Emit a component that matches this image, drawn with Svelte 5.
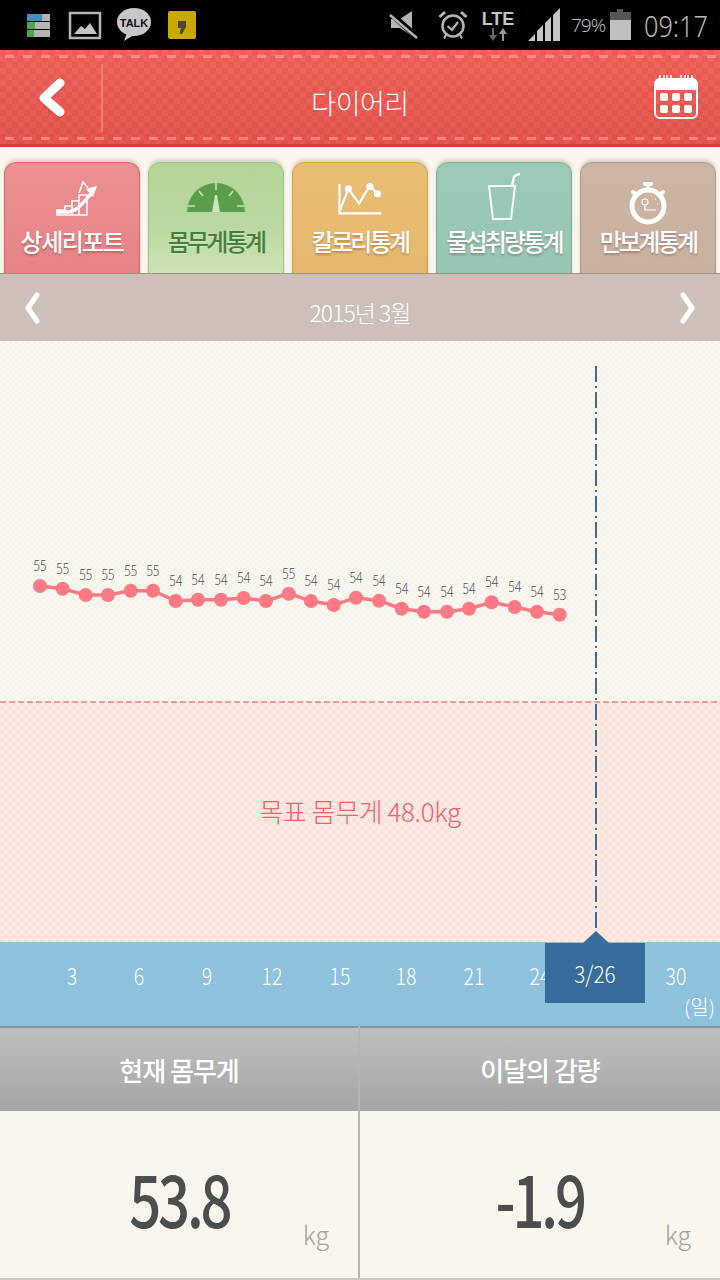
<script lang="ts">
	const points = [
		[40, 586, 55], [62.7, 588.7, 55], [85.7, 595, 55], [108, 595, 55], [130.7, 590.7, 55], [153, 590.7, 55],
		[175.7, 601, 54], [198, 599.7, 54], [221, 599.7, 54], [243.7, 598, 54], [266, 601, 54], [288.7, 593.7, 55],
		[311, 601, 54], [333.7, 605, 54], [356, 597.7, 54], [379, 600.7, 54], [401.7, 608.7, 54], [424, 611.7, 54],
		[447, 611.7, 54], [469, 608.7, 54], [491.7, 602.3, 54], [514.7, 607, 54], [537, 611.7, 54], [559.7, 614.7, 53]
	];
	const line = points.map((p) => p[0] + ',' + (p[1] - 341)).join(' ');

	const ticks = [
		{ x: 72, t: '3' }, { x: 139, t: '6' }, { x: 207, t: '9' }, { x: 272, t: '12' }, { x: 340, t: '15' },
		{ x: 406, t: '18' }, { x: 474, t: '21' }, { x: 540, t: '24' }, { x: 676, t: '30' }
	];

	const tabs = [
		{ id: 'report', label: '상세리포트' },
		{ id: 'weight', label: '몸무게통계' },
		{ id: 'kcal', label: '칼로리통계' },
		{ id: 'water', label: '물섭취량통계' },
		{ id: 'steps', label: '만보계통계' }
	];
</script>

<main>
	<div class="status">
		<div class="status-left">
			<svg width="26" height="28" viewBox="0 0 26 28">
				<rect x="1" y="3" width="15" height="7" fill="#3d8fc4" /><rect x="16" y="3" width="8" height="7" fill="#b5b5b5" />
				<rect x="1" y="11" width="8" height="7" fill="#4aa64a" /><rect x="9" y="11" width="15" height="7" fill="#b5b5b5" />
				<rect x="1" y="19" width="7" height="7" fill="#4aa64a" /><rect x="8" y="19" width="16" height="7" fill="#b5b5b5" />
			</svg>
			<svg width="34" height="30" viewBox="0 0 34 30">
				<rect x="2" y="3" width="30" height="25" fill="none" stroke="#b5b5b5" stroke-width="2.5" />
				<path d="M6 24 L13 16 L17 19 L22 13 L29 24 Z" fill="#c4c4c4" />
			</svg>
			<svg width="36" height="36" viewBox="0 0 36 36">
				<ellipse cx="18" cy="15" rx="17" ry="14" fill="#c8c8c8" />
				<path d="M11 26 L8 34 L18 28 Z" fill="#c8c8c8" />
				<text x="18" y="19.5" text-anchor="middle" class="talk">TALK</text>
			</svg>
			<svg width="30" height="30" viewBox="0 0 30 30">
				<rect x="1" y="1" width="28" height="28" rx="2" fill="#c9a800" />
				<path d="M11 11 H19 V17 L15 24 H12.5 L14 18 H11 Z" fill="#4a4a30" />
			</svg>
		</div>
		<div class="status-right">
			<svg width="32" height="30" viewBox="0 0 32 30">
				<path d="M2 9 H11 L23 1 V26 L11 18 H2 Z" fill="#b5b5b5" />
				<path d="M1 3 L28 27" stroke="#000" stroke-width="6" />
				<path d="M1 5 L28 28" stroke="#b5b5b5" stroke-width="2.5" />
			</svg>
			<svg width="30" height="30" viewBox="0 0 30 30" fill="none" stroke="#b5b5b5">
				<circle cx="15" cy="16" r="10.5" stroke-width="2.5" />
				<path d="M9.500 16 L14 20 L20 12" stroke-width="2.2" />
				<path d="M1.500 7 L7 2 M23 2 L28.500 7" stroke-width="3" />
				<path d="M8 25 L6 28.500 M22 25 L24 28.500" stroke-width="2" />
			</svg>
			<div class="lte">
				<span>LTE</span>
				<svg width="20" height="13" viewBox="0 0 20 13">
					<path d="M6 0 V7 H9 L5 13 L1 7 H4 V0 Z" fill="#666" />
					<path d="M14 13 V6 H11 L15 0 L19 6 H16 V13 Z" fill="#999" />
				</svg>
			</div>
			<svg class="signal" width="34" height="36" viewBox="0 0 34 36">
				<path d="M1 34 L8 27 V34 Z M10 34 V24 L16 18 V34 Z M18 34 V16 L24 10 V34 Z M26 34 V8 L33 1 V34 Z" fill="#c4c4c4" />
			</svg>
			<span class="pct">79%</span>
			<svg class="battery" width="24" height="32" viewBox="0 0 24 32">
				<path d="M8 0 H14 V3 H22 V11 H1 V3 H8 Z" fill="#555" />
				<rect x="1" y="11" width="21" height="20" fill="#c0c0c0" />
			</svg>
			<span class="clock">09:17</span>
		</div>
	</div>

	<header class="topbar">
		<div class="back">
			<svg width="30" height="40" viewBox="0 0 30 40">
				<path d="M23 5 L7 20 L23 34" fill="none" stroke="#c9433a" stroke-width="9" stroke-linecap="round" stroke-linejoin="round" opacity="0.5" transform="translate(0 1.500)" />
				<path d="M23 5 L7 20 L23 34" fill="none" stroke="#fff" stroke-width="9" stroke-linecap="round" stroke-linejoin="round" />
			</svg>
		</div>
		<h1>다이어리</h1>
		<div class="cal">
			<svg width="46" height="46" viewBox="0 0 46 46">
				<rect x="2" y="5" width="42" height="39" rx="5" fill="none" stroke="#fff" stroke-width="2" />
				<path d="M2 16 V9 a5 5 0 0 1 5 -5 H39 a5 5 0 0 1 5 5 V16 Z" fill="#fff" />
				<path d="M7 1 V8 a1.500 1.500 0 0 0 4 0 V1 M14 1 V8 a1.500 1.500 0 0 0 4 0 V1 M28 1 V8 a1.500 1.500 0 0 0 4 0 V1 M35 1 V8 a1.500 1.500 0 0 0 4 0 V1" fill="none" stroke="#fff" stroke-width="1.500" />
				<g fill="#fff">
					<rect x="7" y="19" width="8" height="8" rx="2" /><rect x="19" y="19" width="8" height="8" rx="2" /><rect x="31" y="19" width="8" height="8" rx="2" />
					<rect x="7" y="31" width="8" height="8" rx="2" /><rect x="19" y="31" width="8" height="8" rx="2" /><rect x="31" y="31" width="8" height="8" rx="2" />
				</g>
			</svg>
		</div>
	</header>

	<nav class="tabs">
		{#each tabs as tab}
			<div class="tab {tab.id}">
				<div class="tab-icon">
					{#if tab.id === 'report'}
						<svg width="44" height="38" viewBox="0 0 44 38" fill="none" stroke="#fff" stroke-width="1.500">
							<path d="M3 36 V31 H11 V27 H18 V22 H25 V16 H33 V36 Z M11 31 V36 M18 27 V36 M25 22 V36" />
							<path d="M2 33 H14 C24 32 30 22 39 13" stroke-width="3.500" />
							<path d="M32 10 L43 7 L39 18 Z" fill="#fff" stroke="none" />
							<path d="M25 14 L29 3 L34 9" />
						</svg>
					{:else if tab.id === 'weight'}
						<svg width="60" height="32" viewBox="0 0 60 32">
							<path d="M1 31 A29 29 0 0 1 59 31 Z" fill="#5a9e4b" />
							<path d="M30 2 V9 M13 10 L17 15 M47 10 L43 15 M2 25 H9 M51 25 H58" stroke="#cfe3b9" stroke-width="1.500" />
							<path d="M26 31 L29 14 H31 L34 31 Z" fill="#cfe3b9" />
						</svg>
					{:else if tab.id === 'kcal'}
						<svg width="48" height="34" viewBox="0 0 52 38" fill="none" stroke="#fff" stroke-width="2.500">
							<path d="M3 1 V34 H50" />
							<path d="M3 32 L13 6.500 L25 23 L37 3 L45.500 12" />
							<g fill="#fff" stroke="none"><circle cx="13" cy="6.500" r="4" /><circle cx="37" cy="4" r="4" /><circle cx="45.500" cy="12" r="4" /></g>
						</svg>
					{:else if tab.id === 'water'}
						<svg width="34" height="48" viewBox="0 0 34 48" fill="none" stroke="#fff" stroke-width="2">
							<path d="M2 13 H28 L24 46 H6 Z" />
							<path d="M25 13 L27 4 Q28 2 33 1" stroke-width="2.500" />
						</svg>
					{:else}
						<svg width="40" height="44" viewBox="0 0 40 44" fill="none" stroke="#fff">
							<circle cx="20" cy="25" r="16" stroke-width="5" />
							<rect x="15" y="1" width="10" height="4" rx="2" fill="#fff" stroke="none" />
							<path d="M20 4 V9" stroke-width="3" />
							<path d="M5 11 L8 14 M35 11 L32 14" stroke-width="4" stroke-linecap="round" />
							<circle cx="17" cy="21" r="3" stroke-width="1.200" />
							<path d="M17 25 V29 H28 M23 15 h1 M27 18 h1 M29 23 h1" stroke-width="1.200" />
						</svg>
					{/if}
				</div>
				<span>{tab.label}</span>
			</div>
		{/each}
	</nav>

	<div class="month">
		<svg width="16" height="32" viewBox="0 0 16 32"><path d="M13 3 L4 16 L13 29" fill="none" stroke="#fff" stroke-width="5" stroke-linecap="round" stroke-linejoin="round" /></svg>
		<span>2015년 3월</span>
		<svg width="16" height="32" viewBox="0 0 16 32"><path d="M3 3 L12 16 L3 29" fill="none" stroke="#fff" stroke-width="5" stroke-linecap="round" stroke-linejoin="round" /></svg>
	</div>

	<section class="chart">
		<div class="zone-free"></div>
		<div class="zone-goal"><span>목표 몸무게 48.0kg</span></div>
		<svg class="plot" width="720" height="601" viewBox="0 0 720 601">
			<line x1="0" y1="361" x2="720" y2="361" stroke="#e0857c" stroke-width="1.500" stroke-dasharray="6 3" />
			<line x1="596" y1="25" x2="596" y2="592" stroke="#3a6d9b" stroke-width="2" stroke-dasharray="16 4 2 4" />
			<polyline points={line} fill="none" stroke="#fd7a85" stroke-width="3.500" />
			{#each points as p}
				<circle cx={p[0]} cy={p[1] - 341} r="7" fill="#fd7a85" />
				<text x={p[0]} y={p[1] - 341 - 15} text-anchor="middle" textLength="13" lengthAdjust="spacingAndGlyphs" class="val">{p[2]}</text>
			{/each}
		</svg>
	</section>

	<div class="axis">
		{#each ticks as tick}
			<span class="tick" style="left: {tick.x}px">{tick.t}</span>
		{/each}
		<div class="marker"><span>3/26</span></div>
		<span class="unit">(일)</span>
	</div>

	<section class="summary">
		<div class="col">
			<div class="col-head">현재 몸무게</div>
			<div class="col-body"><b>53.8</b><small>kg</small></div>
		</div>
		<div class="col">
			<div class="col-head">이달의 감량</div>
			<div class="col-body"><b>-1.9</b><small>kg</small></div>
		</div>
	</section>
</main>

<style>
	:global(body) {
		margin: 0;
		background: #faf6ee;
		font-family: 'Noto Sans CJK KR', 'Noto Sans', sans-serif;
	}

	main {
		width: 720px;
		height: 1280px;
		overflow: hidden;
		display: flex;
		flex-direction: column;
	}

	.status {
		height: 50px;
		background: #000;
		display: flex;
		align-items: center;
		justify-content: space-between;
		flex-shrink: 0;
	}

	.status-left {
		display: flex;
		align-items: center;
		gap: 10px;
		padding-left: 26px;
	}

	.status-left svg:nth-child(1) { margin-right: 6px; }
	.status-left svg:nth-child(2) { margin-right: 4px; }
	.status-left svg:nth-child(3) { margin-right: 5px; }

	.talk {
		font-family: 'Liberation Sans', sans-serif;
		font-size: 11px;
		font-weight: 700;
		fill: #111;
	}

	.status-right {
		display: flex;
		align-items: center;
		padding-right: 15px;
		color: #b8b8b8;
	}

	.status-right > svg:nth-child(1) { margin-right: 17px; }

	.lte {
		display: flex;
		flex-direction: column;
		align-items: center;
		font-family: 'Liberation Sans', sans-serif;
		font-weight: 700;
		font-size: 18px;
		line-height: 18px;
		width: 36px;
		margin-left: 12px;
		color: #c4c4c4;
	}

	.signal { margin-left: 11px; }

	.pct {
		font-family: 'Noto Sans', sans-serif;
		font-size: 19px;
		letter-spacing: -1px;
		width: 33px;
		margin-left: 10px;
		white-space: nowrap;
		font-weight: 300;
	}

	.battery { margin-left: 5px; }

	.clock {
		font-family: 'Noto Sans', sans-serif;
		font-size: 29px;
		font-weight: 300;
		margin-left: 11px;
		width: 61px;
		white-space: nowrap;
		transform: scaleX(0.87);
		transform-origin: left center;
		color: #b8b8b8;
	}

	.topbar {
		height: 97px;
		flex-shrink: 0;
		box-sizing: border-box;
		border-bottom: 3px solid #c9433a;
		background-color: #ea5a52;
		background-image:
			repeating-conic-gradient(rgba(255, 255, 255, 0.035) 0 25%, rgba(0, 0, 0, 0.02) 0 50%),
			linear-gradient(#ef6058, #e4524a);
		background-size: 12px 12px, 100% 100%;
		display: flex;
		align-items: center;
		justify-content: center;
		position: relative;
	}

	/* stitching */
	.topbar::before,
	.topbar::after {
		content: '';
		position: absolute;
		left: 5px;
		right: 0;
		height: 3px;
		background: repeating-linear-gradient(90deg, rgba(255, 190, 180, 0.45) 0 9px, transparent 9px 18px);
	}

	.topbar::before { top: 5px; }
	.topbar::after { bottom: 4px; }

	.back {
		position: absolute;
		left: 0;
		top: 14px;
		width: 103px;
		height: 68px;
		border-right: 2px solid rgba(255, 170, 155, 0.45);
		box-sizing: border-box;
		display: flex;
		align-items: center;
		padding-left: 37px;
	}

	.topbar h1 {
		margin: 0;
		color: #fff;
		font-size: 27px;
		font-weight: 300;
		letter-spacing: -0.5px;
		position: relative;
		top: 5px;
	}

	.cal {
		position: absolute;
		right: 21px;
		top: 24px;
		width: 46px;
	}

	.tabs {
		height: 126px;
		flex-shrink: 0;
		box-sizing: border-box;
		padding: 15px 4px 0;
		display: grid;
		grid-template-columns: repeat(5, 136px);
		gap: 8px;
		background: #faf6ee;
		overflow: hidden;
	}

	.tab {
		height: 125px;
		box-sizing: border-box;
		border-radius: 12px 12px 0 0;
		border: 1px solid;
		border-bottom: 0;
		box-shadow: 0 -3px 3px rgba(90, 80, 60, 0.18);
		color: #fff;
		display: flex;
		flex-direction: column;
		align-items: center;
		background-size: 4px 4px, 100% 100%;
	}

	.tab span {
		font-size: 24px;
		font-weight: 500;
		letter-spacing: -2.8px;
		line-height: 30px;
		text-shadow: 0 2px 2px rgba(90, 60, 50, 0.35);
		white-space: nowrap;
	}

	.report span { letter-spacing: -1.5px; }

	.tab-icon {
		height: 50px;
		margin-top: 13px;
		display: flex;
		align-items: flex-end;
		justify-content: center;
		width: 100%;
	}

	.tab-icon svg { overflow: visible; }

	.report svg { margin: 0 0 9px 8px; }
	.kcal svg { margin-bottom: 9px; }
	.weight svg { margin-bottom: 13px; }
	.water svg { margin-bottom: 5px; }
	.steps svg { margin-bottom: 1px; }

	.report {
		background-image: repeating-conic-gradient(rgba(255, 255, 255, 0.05) 0 25%, transparent 0 50%), linear-gradient(#ec8d8f, #e47f83);
		border-color: #d9686c;
	}

	.weight {
		background-image: repeating-conic-gradient(rgba(255, 255, 255, 0.05) 0 25%, transparent 0 50%), linear-gradient(#b2d394, #b9d79e 50%, #d2e4ba);
		border-color: #a0c486;
		color: #437f3a;
	}

	.weight span { text-shadow: 0 1px 1px rgba(255, 255, 255, 0.3); }

	.kcal {
		background-image: repeating-conic-gradient(rgba(255, 255, 255, 0.05) 0 25%, transparent 0 50%), linear-gradient(#e8bb70, #e5b56c);
		border-color: #d5a640;
	}

	.water {
		background-image: repeating-conic-gradient(rgba(255, 255, 255, 0.05) 0 25%, transparent 0 50%), linear-gradient(#99c9b6, #92c4b0);
		border-color: #7dae98;
	}

	.steps {
		background-image: repeating-conic-gradient(rgba(255, 255, 255, 0.05) 0 25%, transparent 0 50%), linear-gradient(#cbb2a1, #c7ae9e);
		border-color: #b09a8a;
	}

	.month {
		height: 68px;
		flex-shrink: 0;
		box-sizing: border-box;
		border-top: 1px solid #a08f85;
		background: #cdc0b9;
		display: flex;
		align-items: center;
		justify-content: space-between;
		padding: 0 24px;
		color: #fff;
	}

	.month span {
		font-size: 23px;
		font-weight: 300;
		letter-spacing: -1px;
		position: relative;
		top: 4px;
	}

	.chart {
		position: relative;
		height: 601px;
		flex-shrink: 0;
		display: flex;
		flex-direction: column;
	}

	.zone-free {
		height: 361px;
		background-color: #faf7ef;
		background-image: repeating-conic-gradient(#f6f3ea 0 25%, transparent 0 50%);
		background-size: 6px 6px;
	}

	.zone-goal {
		flex: 1;
		background-color: #fdeae2;
		background-image: repeating-conic-gradient(#fbe3da 0 25%, transparent 0 50%);
		background-size: 8px 8px;
		display: flex;
		justify-content: center;
		padding-top: 90px;
		box-sizing: border-box;
		color: #ee6270;
		font-size: 26px;
		font-weight: 300;
		letter-spacing: -0.4px;
	}

	.plot {
		position: absolute;
		left: 0;
		top: 0;
	}

	.val {
		font-family: 'Noto Sans', sans-serif;
		font-size: 15px;
		font-weight: 300;
		fill: #4e4e4e;
	}

	.axis {
		height: 84px;
		flex-shrink: 0;
		background: #8ec2dc;
		position: relative;
		color: #fff;
		font-size: 23px;
		font-weight: 300;
	}

	.tick {
		position: absolute;
		top: 17px;
		transform: translateX(-50%) scaleX(0.85);
		line-height: 32px;
	}

	.marker {
		position: absolute;
		left: 545px;
		top: 1px;
		width: 100px;
		height: 60px;
		background: #376c9b;
		display: flex;
		align-items: center;
		justify-content: center;
	}

	.marker::before {
		content: '';
		position: absolute;
		left: 38px;
		top: -12px;
		border-left: 13px solid transparent;
		border-right: 13px solid transparent;
		border-bottom: 12px solid #376c9b;
	}

	.marker span {
		transform: scaleX(0.9);
	}

	.unit {
		position: absolute;
		right: 5px;
		top: 50px;
		font-size: 20px;
		line-height: 30px;
	}

	.summary {
		flex: 1;
		display: grid;
		grid-template-columns: 360px 360px;
		border-bottom: 2px solid #c8c8c8;
		background: #faf6ee;
	}

	.col {
		display: flex;
		flex-direction: column;
	}

	.col:first-child { border-right: 2px solid #b5b5b3; }

	.col-head {
		height: 85px;
		flex-shrink: 0;
		box-sizing: border-box;
		border-top: 2px solid #8f9295;
		background: linear-gradient(#c0bfbf, #a5a5a5);
		color: #fff;
		display: flex;
		align-items: center;
		justify-content: center;
		font-size: 26px;
		font-weight: 500;
		letter-spacing: -1px;
	}

	.col-body {
		flex: 1;
		position: relative;
		display: flex;
		align-items: center;
		justify-content: center;
		color: #4d4d4d;
	}

	.col-body b {
		font-size: 72px;
		font-weight: 500;
		letter-spacing: -4px;
		line-height: 1;
		position: relative;
		top: 2px;
		transform: scaleX(0.78);
	}

	.col-body small {
		position: absolute;
		right: 29px;
		bottom: 28px;
		font-size: 25px;
		line-height: 32px;
		font-weight: 300;
		color: #a3a19d;
	}
</style>
